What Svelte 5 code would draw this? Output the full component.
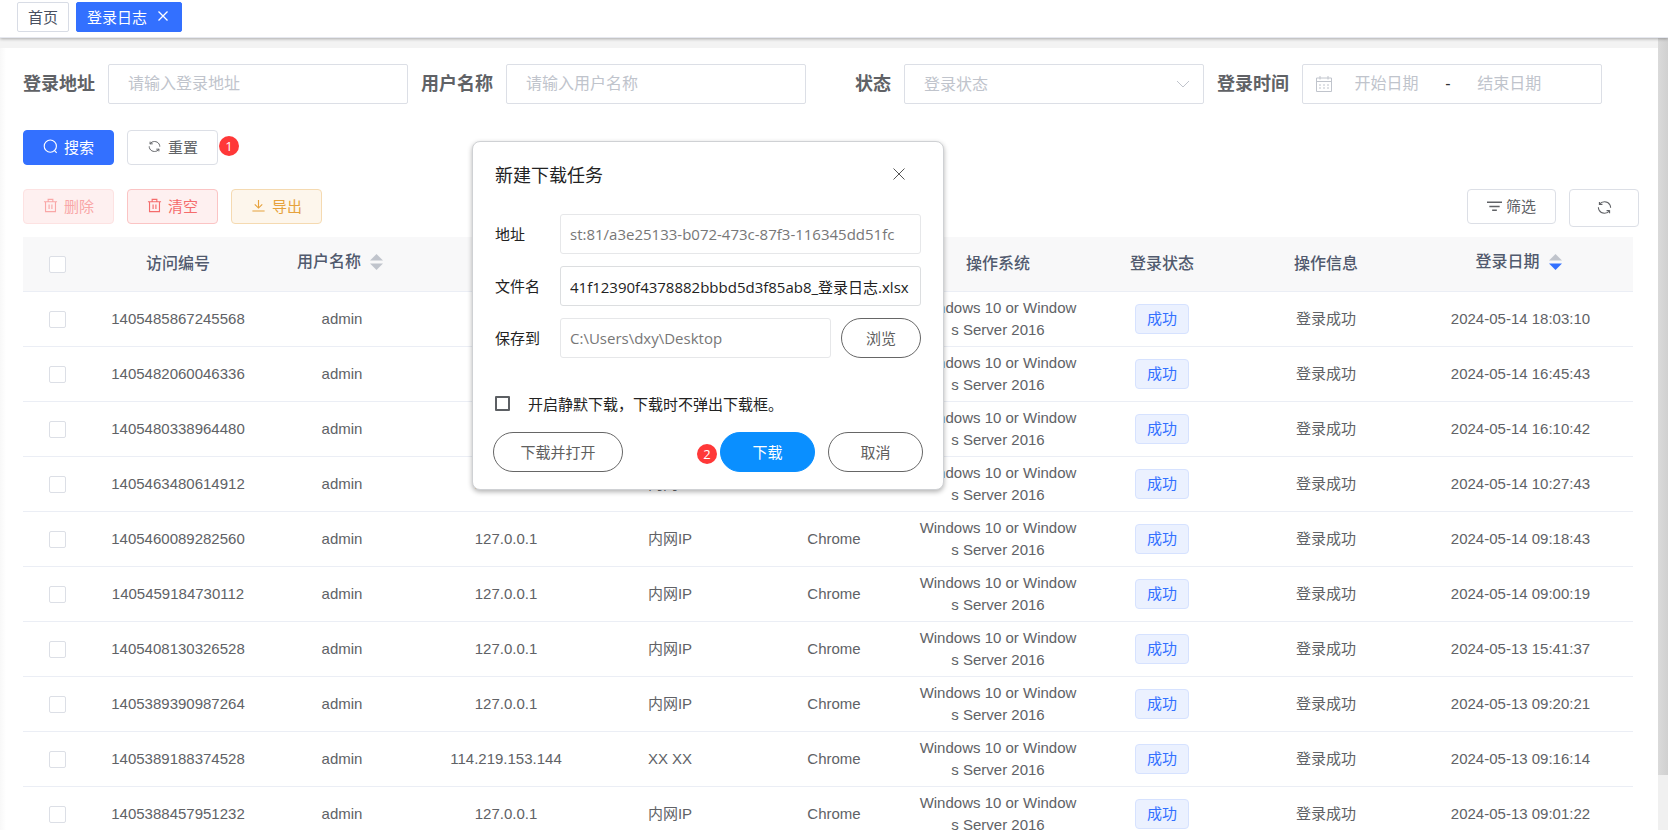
<script>
  import { onMount } from 'svelte';

  const columns = [
    { title: '访问编号' },
    { title: '用户名称', sort: 'none' },
    { title: '登录地址' },
    { title: '登录地点' },
    { title: '浏览器' },
    { title: '操作系统' },
    { title: '登录状态' },
    { title: '操作信息' },
    { title: '登录日期', sort: 'desc' }
  ];

  const rows = [
    { id: '1405485867245568', ip: '127.0.0.1', place: '内网IP', date: '2024-05-14 18:03:10' },
    { id: '1405482060046336', ip: '127.0.0.1', place: '内网IP', date: '2024-05-14 16:45:43' },
    { id: '1405480338964480', ip: '127.0.0.1', place: '内网IP', date: '2024-05-14 16:10:42' },
    { id: '1405463480614912', ip: '127.0.0.1', place: '内网IP', date: '2024-05-14 10:27:43' },
    { id: '1405460089282560', ip: '127.0.0.1', place: '内网IP', date: '2024-05-14 09:18:43' },
    { id: '1405459184730112', ip: '127.0.0.1', place: '内网IP', date: '2024-05-14 09:00:19' },
    { id: '1405408130326528', ip: '127.0.0.1', place: '内网IP', date: '2024-05-13 15:41:37' },
    { id: '1405389390987264', ip: '127.0.0.1', place: '内网IP', date: '2024-05-13 09:20:21' },
    { id: '1405389188374528', ip: '114.219.153.144', place: 'XX XX', date: '2024-05-13 09:16:14' },
    { id: '1405388457951232', ip: '127.0.0.1', place: '内网IP', date: '2024-05-13 09:01:22' }
  ];

  let fileInput;

  // Keep the end of a long file name in view
  onMount(() => {
    fileInput.scrollLeft = fileInput.scrollWidth;
  });
</script>

{#snippet refreshIcon()}
  <svg class="icon" viewBox="0 0 16 16" aria-hidden="true">
    <path d="M2.6 5.2V2M2.6 4.6C5 1 11.2 0.8 13.7 5C14.3 6 14.5 7 14.5 8.2M13.4 10.8V14M13.4 11.4C11 15 4.8 15.2 2.3 11C1.7 10 1.5 9 1.5 7.8" />
    <path d="M2.6 4.7H5.8M13.4 11.3H10.2" />
  </svg>
{/snippet}

{#snippet trashIcon()}
  <svg class="icon" viewBox="0 0 16 16" aria-hidden="true">
    <path d="M1 4H15M5.5 4V1.5H10.5V4M2.7 4V14.5H13.3V4M6.5 6.8V11.8M9.5 6.8V11.8" />
  </svg>
{/snippet}

<div class="app">
  <nav class="tabs">
    <a class="tab" href="#home">首页</a>
    <a class="tab active" href="#log">
      登录日志
      <svg class="tab-close" viewBox="0 0 12 12" aria-hidden="true"><path d="M1.5 1.5L10.5 10.5M10.5 1.5L1.5 10.5" /></svg>
    </a>
  </nav>

  <div class="body">
    <main class="panel">
      <form class="filters">
        <div class="filter">
          <label for="addr">登录地址</label>
          <input id="addr" class="control" type="text" placeholder="请输入登录地址" />
        </div>
        <div class="filter">
          <label for="user">用户名称</label>
          <input id="user" class="control" type="text" placeholder="请输入用户名称" />
        </div>
        <div class="filter">
          <label for="status">状态</label>
          <div class="select-wrap">
            <select id="status" class="control">
              <option>登录状态</option>
            </select>
            <svg class="chevron" viewBox="0 0 14 8" aria-hidden="true"><path d="M1 1L7 7L13 1" /></svg>
          </div>
        </div>
        <div class="filter">
          <label for="start">登录时间</label>
          <div class="control range">
            <svg class="calendar" viewBox="0 0 16 16" aria-hidden="true">
              <path d="M0.5 2H15.5V15.5H0.5ZM0.5 5.5H15.5M4 0V3.5M12 0V3.5" />
              <path d="M3 9H5M7 9H9M11 9H13M3 12H5M7 12H9M11 12H13" />
            </svg>
            <input id="start" type="text" placeholder="开始日期" />
            <span class="dash">-</span>
            <input type="text" placeholder="结束日期" aria-label="结束日期" />
          </div>
        </div>
      </form>

      <div class="actions">
        <button class="btn primary" type="button">
          <svg class="icon" viewBox="0 0 16 16" aria-hidden="true"><circle cx="7.8" cy="7.6" r="6.5" /><path d="M12 12.2L14.6 14.8" /></svg>
          搜索
        </button>
        <button class="btn small-icon" type="button">{@render refreshIcon()}重置</button>
        <span class="badge">1</span>
      </div>

      <div class="toolbar">
        <button class="btn danger faded" type="button">{@render trashIcon()}删除</button>
        <button class="btn danger" type="button">{@render trashIcon()}清空</button>
        <button class="btn warning" type="button">
          <svg class="icon" viewBox="0 0 16 16" aria-hidden="true"><path d="M8 2V10.5M4 6.8L8 10.7L12 6.8M1.5 13.8H14.5" /></svg>
          导出
        </button>
        <div class="spacer"></div>
        <button class="btn filter-btn" type="button">
          <svg class="icon filter-icon" viewBox="0 0 16 16" aria-hidden="true"><path d="M0 4.5H16M2.5 9H13.5M5.5 13H10.5" /></svg>
          筛选
        </button>
        <button class="btn refresh" type="button" aria-label="刷新">{@render refreshIcon()}</button>
      </div>

      <table>
        <colgroup>
          <col class="col-check" />
          {#each columns as column, i}
            <col class:col-date={i === columns.length - 1} />
          {/each}
        </colgroup>
        <thead>
          <tr>
            <th class="check"><input type="checkbox" aria-label="全选" /></th>
            {#each columns as column}
              <th>
                {#if column.sort}
                  <button class="sort" type="button">
                    {column.title}
                    <svg class="carets" class:desc={column.sort === 'desc'} viewBox="0 0 13 16" aria-hidden="true">
                      <path d="M0 6.5L6.5 0L13 6.5Z" />
                      <path class="down" d="M0 9.5L6.5 16L13 9.5Z" />
                    </svg>
                  </button>
                {:else}
                  {column.title}
                {/if}
              </th>
            {/each}
          </tr>
        </thead>
        <tbody>
          {#each rows as row}
            <tr>
              <td class="check"><input type="checkbox" aria-label={row.id} /></td>
              <td>{row.id}</td>
              <td>admin</td>
              <td>{row.ip}</td>
              <td>{row.place}</td>
              <td>Chrome</td>
              <td>Windows 10 or Windows Server 2016</td>
              <td><span class="tag">成功</span></td>
              <td>登录成功</td>
              <td>{row.date}</td>
            </tr>
          {/each}
        </tbody>
      </table>
    </main>
    <div class="scrollbar"><div class="thumb"></div></div>
  </div>

  <dialog class="download" open aria-labelledby="download-title">
    <header>
      <h2 id="download-title">新建下载任务</h2>
      <button class="close" type="button" aria-label="关闭">
        <svg viewBox="0 0 12 12" aria-hidden="true"><path d="M0.5 0.5L11.5 11.5M11.5 0.5L0.5 11.5" /></svg>
      </button>
    </header>

    <div class="fields">
      <label for="url">地址</label>
      <input id="url" class="muted" type="text" readonly value="st:81/a3e25133-b072-473c-87f3-116345dd51fc" />
      <label for="file">文件名</label>
      <input id="file" type="text" bind:this={fileInput} value="41f12390f4378882bbbd5d3f85ab8_登录日志.xlsx" />
      <label for="dir">保存到</label>
      <div class="browse">
        <input id="dir" class="muted" type="text" readonly value="C:\Users\dxy\Desktop" />
        <button class="pill" type="button">浏览</button>
      </div>
    </div>

    <label class="silent">
      <input type="checkbox" />
      开启静默下载，下载时不弹出下载框。
    </label>

    <footer>
      <button class="pill wide" type="button">下载并打开</button>
      <div class="spacer"></div>
      <span class="badge">2</span>
      <button class="pill medium solid" type="button">下载</button>
      <button class="pill medium cancel" type="button">取消</button>
    </footer>
  </dialog>
</div>

<style>
  :global(body) {
    margin: 0;
    overflow: hidden;
    background: #fff;
  }

  * {
    box-sizing: border-box;
  }

  .app {
    position: relative;
    display: flex;
    flex-direction: column;
    height: 100vh;
    font-family: "Liberation Sans", "Noto Sans CJK SC", sans-serif;
    font-size: 15px;
    color: #606266;
  }

  button,
  input,
  select {
    font: inherit;
    color: inherit;
    margin: 0;
  }

  svg {
    fill: none;
    stroke: currentColor;
    flex: none;
  }

  /* Tabs */
  .tabs {
    position: relative;
    z-index: 1;
    display: flex;
    flex: none;
    gap: 7px;
    height: 38px;
    padding: 2px 17px;
    background: #fff;
    border-bottom: 1px solid #e6e8ef;
    box-shadow: 0 1px 3px rgba(0, 0, 0, 0.3);
  }

  .tab {
    display: flex;
    align-items: center;
    height: 30px;
    padding: 0 10px 2px;
    border: 1px solid #d8dce5;
    border-radius: 2px;
    color: #495060;
    text-decoration: none;
  }

  .tab.active {
    gap: 10px;
    padding-right: 12px;
    background: #3370ff;
    border-color: #3370ff;
    color: #fff;
  }

  .tab-close {
    width: 12px;
    height: 12px;
    stroke-width: 1.3;
  }

  .body {
    display: flex;
    flex: 1;
    min-height: 0;
    border-top: 10px solid #f3f3f3;
  }

  .panel {
    flex: 1;
    min-width: 0;
    overflow: hidden;
    padding: 16px 19px 0 23px;
    background: linear-gradient(90deg, #f8f8f8, #fff 6px);
  }

  .scrollbar {
    flex: none;
    width: 10px;
    margin-top: -10px;
    background: #f0f0f0;
  }

  .thumb {
    height: 93%;
    background: linear-gradient(90deg, #dadada, #d0d0d0);
  }

  /* Search form */
  .filters {
    display: grid;
    grid-template-columns: repeat(4, 1fr);
    padding-right: 24px;
  }

  .filter {
    display: flex;
    align-items: center;
    gap: 13px;
    padding-right: 13px;
  }

  .filter label {
    flex: 0 0 72px;
    font-size: 18px;
    font-weight: 700;
    line-height: 40px;
    text-align: right;
    white-space: nowrap;
  }

  .control {
    flex: 1;
    width: 100%;
    min-width: 0;
    height: 40px;
    padding: 0 19px;
    border: 1px solid #dcdfe6;
    border-radius: 2px;
    background: #fff;
    font-size: 16px;
    outline: none;
  }

  input::placeholder {
    color: #c0c4cc;
    opacity: 1;
  }

  .select-wrap {
    position: relative;
    flex: 1;
    min-width: 0;
  }

  select.control {
    appearance: none;
    color: #c0c4cc;
    display: block;
  }

  .chevron {
    position: absolute;
    top: 16px;
    right: 14px;
    width: 14px;
    height: 8px;
    color: #c0c4cc;
    pointer-events: none;
  }

  .range {
    display: flex;
    align-items: center;
    padding: 0 13px;
  }

  .calendar {
    width: 16px;
    height: 16px;
    color: #c0c4cc;
  }

  .range input {
    width: 40%;
    min-width: 0;
    padding: 0;
    border: 0;
    outline: none;
    background: none;
    text-align: center;
  }

  .dash {
    width: 14px;
    text-align: center;
    color: #303133;
  }

  /* Buttons */
  .actions,
  .toolbar {
    display: flex;
    align-items: flex-start;
    gap: 13px;
  }

  .actions {
    margin-top: 26px;
  }

  .toolbar {
    height: 38px;
    margin-top: 24px;
    margin-bottom: 10px;
  }

  .btn {
    display: flex;
    align-items: center;
    justify-content: center;
    gap: 6px;
    height: 35px;
    padding: 0 19px 2px;
    border: 1px solid #dcdfe6;
    border-radius: 4px;
    background: #fff;
    white-space: nowrap;
  }

  .icon {
    width: 15px;
    height: 15px;
    stroke-width: 1.2;
  }

  .small-icon .icon {
    padding: 1px;
  }

  .primary {
    background: #3370ff;
    border-color: #3370ff;
    color: #fff;
  }

  .danger {
    background: #fef0f0;
    border-color: #fbc4c4;
    color: #f56c6c;
  }

  .faded {
    border-color: #fde2e2;
    color: #f9a7a7;
  }

  .warning {
    background: #fdf6ec;
    border-color: #f5dab1;
    color: #e6a23c;
  }

  .filter-btn {
    gap: 4px;
  }

  .filter-icon {
    stroke-width: 1.6;
  }

  .refresh {
    width: 70px;
    height: 38px;
  }

  .spacer {
    flex: 1;
  }

  .badge {
    display: flex;
    flex: none;
    align-items: center;
    justify-content: center;
    width: 20px;
    height: 20px;
    border-radius: 50%;
    background: #ff3838;
    color: #fff;
    font-family: "Open Sans", sans-serif;
    font-size: 13px;
    line-height: 20px;
  }

  .actions .badge {
    margin: 6px 0 0 -12px;
  }

  /* Table */
  table {
    width: calc(100% - 6px);
    table-layout: fixed;
    border-collapse: separate;
    border-spacing: 0;
  }

  .col-check {
    width: 73px;
  }

  .col-date {
    width: 225px;
  }

  th,
  td {
    padding: 5px 2px;
    border-bottom: 1px solid #ebeef5;
    text-align: center;
    vertical-align: middle;
    line-height: 22px;
    word-break: break-all;
  }

  th {
    height: 55px;
    background: #f8f8f9;
    color: #515a6e;
    font-size: 16px;
    font-weight: 500;
  }

  td {
    height: 55px;
  }

  .check {
    padding-right: 7px;
  }

  .check input {
    appearance: none;
    display: block;
    width: 17px;
    height: 17px;
    margin: 0 auto;
    border: 1px solid #dcdfe6;
    border-radius: 2px;
    background: #fff;
  }

  .sort {
    display: inline-flex;
    align-items: center;
    gap: 9px;
    padding: 0 4px 4px 0;
    border: 0;
    background: none;
    vertical-align: middle;
    white-space: nowrap;
  }

  .carets {
    width: 13px;
    height: 16px;
    stroke: none;
    fill: #c0c4cc;
  }

  .desc .down {
    fill: #3370ff;
  }

  .tag {
    display: inline-block;
    height: 30px;
    padding: 0 11px;
    border: 1px solid #d6e2ff;
    border-radius: 4px;
    background: #ebf1ff;
    color: #3370ff;
    line-height: 28px;
    vertical-align: middle;
  }

  /* Download window */
  .download {
    position: absolute;
    z-index: 2;
    top: 141px;
    left: 472px;
    width: 472px;
    margin: 0;
    padding: 0 0 17px;
    border: 1px solid #cfd1d4;
    border-radius: 8px;
    background: #fff;
    box-shadow: 0 2px 5px rgba(0, 0, 0, 0.3);
    color: #222;
    font-family: "Open Sans", "Noto Sans CJK SC", sans-serif;
  }

  .download header {
    display: flex;
    align-items: center;
    justify-content: space-between;
    height: 64px;
    padding: 0 32px 0 22px;
  }

  .download h2 {
    margin: 0;
    font-size: 18px;
    font-weight: 400;
  }

  .close {
    display: flex;
    align-items: center;
    justify-content: center;
    width: 24px;
    height: 24px;
    padding: 0;
    border: 0;
    background: none;
    color: #555;
  }

  .close svg {
    width: 12px;
    height: 12px;
  }

  .fields {
    display: grid;
    grid-template-columns: 65px 1fr;
    align-items: center;
    gap: 12px 0;
    padding: 8px 22px 0;
  }

  .fields label {
    padding-bottom: 2px;
  }

  .fields input {
    width: 100%;
    min-width: 0;
    height: 40px;
    padding: 0 9px;
    border: 1px solid #dcdee0;
    border-radius: 3px;
    background: #fff;
    outline: none;
  }

  .fields .muted {
    border-color: #e6e7e9;
    color: #777;
  }

  .browse {
    display: flex;
    gap: 10px;
  }

  .pill {
    flex: none;
    width: 80px;
    height: 40px;
    padding: 0 0 2px;
    border: 1px solid #666;
    border-radius: 20px;
    background: #fff;
    color: #606060;
  }

  .wide {
    width: 130px;
  }

  .medium {
    width: 95px;
  }

  .solid {
    margin-left: 3px;
    border-color: #0a8fff;
    background: #0a8fff;
    color: #fff;
  }

  .cancel {
    margin-left: 13px;
  }

  .silent {
    display: flex;
    align-items: center;
    gap: 18px;
    height: 24px;
    margin-top: 33px;
    padding: 0 22px;
  }

  .silent input {
    appearance: none;
    width: 15px;
    height: 15px;
    border: 2px solid #5c5f63;
    border-radius: 1px;
  }

  .download footer {
    display: flex;
    align-items: center;
    margin-top: 17px;
    padding: 0 20px;
  }

  .download .badge {
    margin-top: 4px;
  }
</style>
